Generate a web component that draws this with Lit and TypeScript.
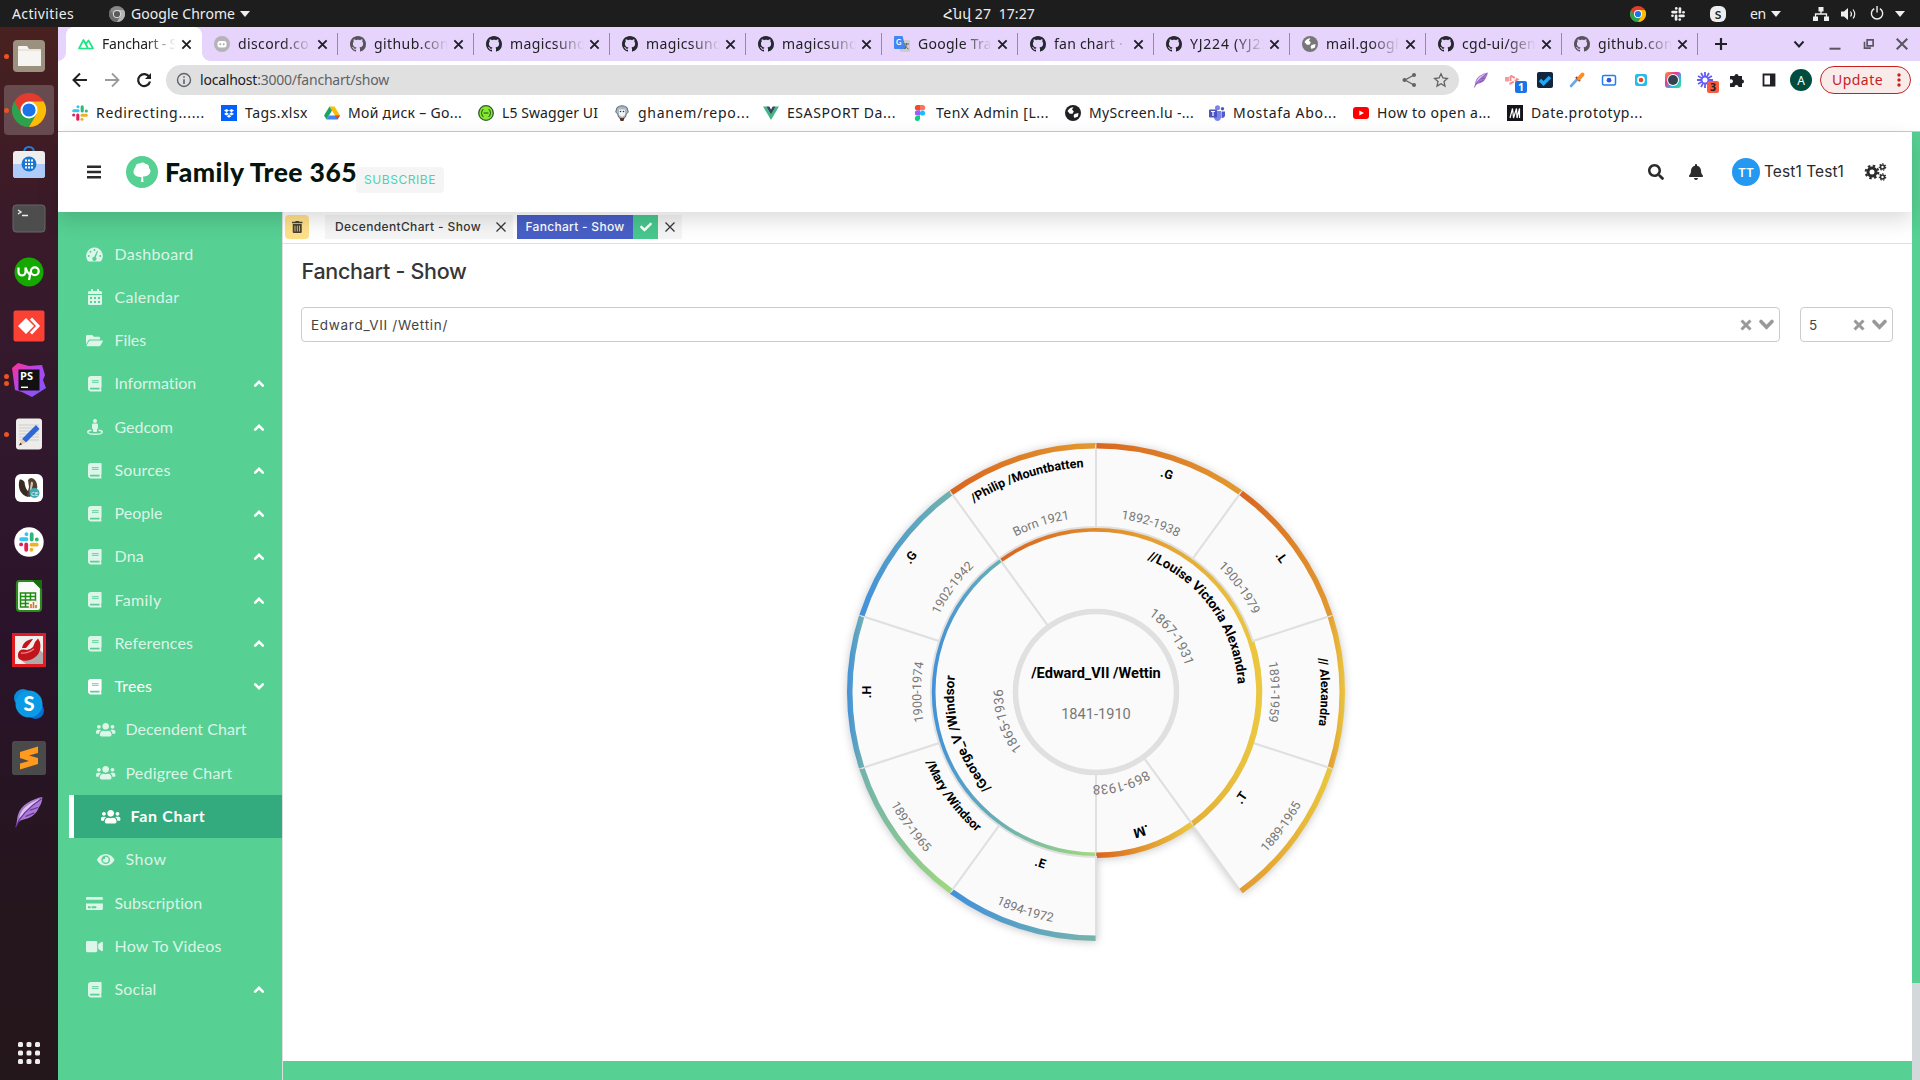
import { LitElement, html, svg, css, TemplateResult } from "lit";
import { customElement } from "lit/decorators.js";
import { styleMap } from "lit/directives/style-map.js";
import { classMap } from "lit/directives/class-map.js";

/* ---------- shared helpers ---------- */

/** Text whose tracking is adjusted so that it fills the given width. */
const fit = (text: string, w: number, cls = "") =>
  html`<span class="fit ${cls}" data-w=${w}>${text}</span>`;

class FitElement extends LitElement {
  updated() {
    this.renderRoot.querySelectorAll<HTMLElement>(".fit").forEach((el) => {
      el.style.letterSpacing = "0px";
      const natural = el.getBoundingClientRect().width;
      const target = Number(el.dataset.w);
      const n = [...(el.textContent ?? "")].length;
      el.style.letterSpacing = `${(target - natural) / n}px`;
    });
  }
}

const slot = (w: number, content: unknown) =>
  html`<span class="slot" style=${styleMap({ width: `${w}px` })}>${content}</span>`;

const icon = (w: number, h: number, vb: string, body: unknown) =>
  html`<svg class="ico" width=${w} height=${h} viewBox=${vb} fill="currentColor">${body}</svg>`;

const fa = (d: string, vw: number, h: number) =>
  icon((h * vw) / 512, h, `0 0 ${vw} 512`, svg`<path d=${d}></path>`);

/* ---------- icon library ---------- */

const P = {
  book: "M448 360V24c0-13.3-10.7-24-24-24H96C43 0 0 43 0 96v320c0 53 43 96 96 96h328c13.3 0 24-10.7 24-24v-16c0-7.500-3.500-14.300-8.900-18.700-4.200-15.400-4.200-59.300 0-74.700 5.400-4.300 8.900-11.100 8.900-18.600zM128 134c0-3.300 2.700-6 6-6h212c3.300 0 6 2.700 6 6v20c0 3.300-2.700 6-6 6H134c-3.300 0-6-2.700-6-6v-20zm0 64c0-3.300 2.700-6 6-6h212c3.300 0 6 2.700 6 6v20c0 3.300-2.700 6-6 6H134c-3.300 0-6-2.700-6-6v-20zm253.400 250H96c-17.700 0-32-14.300-32-32 0-17.600 14.400-32 32-32h285.400c-1.900 17.100-1.900 46.900 0 64z",
  users: "M96 224c35.3 0 64-28.7 64-64s-28.7-64-64-64-64 28.7-64 64 28.7 64 64 64zm448 0c35.3 0 64-28.7 64-64s-28.7-64-64-64-64 28.7-64 64 28.7 64 64 64zm32 32h-64c-17.6 0-33.5 7.1-45.1 18.6 40.3 22.1 68.9 62 75.1 109.4h66c17.7 0 32-14.3 32-32v-32c0-35.3-28.7-64-64-64zm-256 0c61.900 0 112-50.1 112-112S381.900 32 320 32 208 82.1 208 144s50.1 112 112 112zm76.8 32h-8.3c-20.8 10-43.9 16-68.5 16s-47.6-6-68.500-16h-8.300C179.600 288 128 339.600 128 403.200V432c0 26.500 21.500 48 48 48h288c26.500 0 48-21.500 48-48v-28.800c0-63.600-51.600-115.200-115.200-115.200zm-223.700-13.400C161.500 263.100 145.600 256 128 256H64c-35.300 0-64 28.700-64 64v32c0 17.700 14.300 32 32 32h65.900c6.300-47.400 34.900-87.300 75.200-109.400z",
  folder: "M572.694 292.093L500.27 416.248A63.997 63.997 0 0 1 444.989 448H45.025c-18.523 0-30.064-20.093-20.731-36.093l72.424-124.155A64 64 0 0 1 152 256h399.964c18.523 0 30.064 20.093 20.73 36.093zM152 224h328v-48c0-26.51-21.49-48-48-48H272l-64-64H48C21.49 64 0 85.49 0 112v278.046l69.077-118.418C86.214 242.25 117.989 224 152 224z",
  search: "M505 442.7L405.3 343c-4.5-4.5-10.6-7-17-7H372c27.6-35.3 44-79.7 44-128C416 93.1 322.9 0 208 0S0 93.1 0 208s93.1 208 208 208c48.3 0 92.7-16.4 128-44v16.3c0 6.4 2.5 12.5 7 17l99.7 99.7c9.4 9.4 24.6 9.4 33.9 0l28.3-28.3c9.4-9.4 9.4-24.6.1-34zM208 336c-70.7 0-128-57.2-128-128 0-70.7 57.2-128 128-128 70.7 0 128 57.2 128 128 0 70.7-57.2 128-128 128z",
  bell: "M224 512c35.32 0 63.97-28.65 63.97-64H160.03c0 35.35 28.65 64 63.97 64zm215.39-149.71c-19.32-20.76-55.47-51.99-55.47-154.29 0-77.7-54.48-139.9-127.94-155.16V32c0-17.67-14.32-32-31.98-32s-31.98 14.33-31.98 32v20.84C118.56 68.1 64.08 130.3 64.08 208c0 102.3-36.15 133.53-55.47 154.29-6 6.45-8.66 14.16-8.61 21.71.11 16.4 12.98 32 32.1 32h383.8c19.12 0 32-15.6 32.1-32 .05-7.55-2.61-15.27-8.61-21.71z",
  eye: "M572.52 241.4C518.29 135.59 410.93 64 288 64S57.68 135.64 3.48 241.41a32.35 32.35 0 0 0 0 29.19C57.71 376.41 165.07 448 288 448s230.32-71.64 284.52-177.41a32.35 32.35 0 0 0 0-29.19zM288 400a144 144 0 1 1 144-144 143.93 143.93 0 0 1-144 144zm0-240a95.31 95.31 0 0 0-25.31 3.79 47.85 47.85 0 0 1-66.9 66.9A95.78 95.78 0 1 0 288 160z",
  card: "M0 432c0 26.5 21.5 48 48 48h480c26.5 0 48-21.5 48-48V256H0v176zm192-68c0-6.6 5.4-12 12-12h136c6.6 0 12 5.4 12 12v40c0 6.6-5.4 12-12 12H204c-6.6 0-12-5.4-12-12v-40zm-128 0c0-6.6 5.4-12 12-12h72c6.6 0 12 5.4 12 12v40c0 6.6-5.4 12-12 12H76c-6.6 0-12-5.4-12-12v-40zM576 80v48H0V80c0-26.5 21.5-48 48-48h480c26.5 0 48 21.5 48 48z",
  video: "M336.2 64H47.8C21.4 64 0 85.4 0 111.8v288.4C0 426.6 21.4 448 47.8 448h288.4c26.4 0 47.8-21.4 47.8-47.8V111.8c0-26.4-21.4-47.8-47.8-47.8zm189.4 37.7L416 177.3v157.4l109.6 75.5c21.2 14.6 50.4-.3 50.4-25.8V127.5c0-25.4-29.1-40.4-50.4-25.8z",
  check: "M173.898 439.404l-166.4-166.4c-9.997-9.997-9.997-26.206 0-36.204l36.203-36.204c9.997-9.998 26.207-9.998 36.204 0L192 312.69 432.095 72.596c9.997-9.997 26.207-9.997 36.204 0l36.203 36.204c9.997 9.997 9.997 26.206 0 36.204l-294.4 294.401c-9.998 9.997-26.207 9.997-36.204-.001z",
  trash: "M32 464a48 48 0 0 0 48 48h288a48 48 0 0 0 48-48V128H32zm272-256a16 16 0 0 1 32 0v224a16 16 0 0 1-32 0zm-96 0a16 16 0 0 1 32 0v224a16 16 0 0 1-32 0zm-96 0a16 16 0 0 1 32 0v224a16 16 0 0 1-32 0zM432 32H312l-9.4-18.7A24 24 0 0 0 281.1 0H166.8a23.72 23.72 0 0 0-21.4 13.3L136 32H16A16 16 0 0 0 0 48v32a16 16 0 0 0 16 16h416a16 16 0 0 0 16-16V48a16 16 0 0 0-16-16z",
  github: "M8 0C3.58 0 0 3.58 0 8c0 3.54 2.29 6.53 5.47 7.59.4.07.55-.17.55-.38 0-.19-.01-.82-.01-1.49-2.01.37-2.53-.49-2.69-.94-.09-.23-.48-.94-.82-1.13-.28-.15-.68-.52-.01-.53.63-.01 1.08.58 1.23.82.72 1.21 1.87.87 2.33.66.07-.52.28-.87.51-1.07-1.78-.2-3.64-.89-3.64-3.95 0-.87.31-1.59.82-2.15-.08-.2-.36-1.02.08-2.12 0 0 .67-.21 2.2.82.64-.18 1.32-.27 2-.27.68 0 1.36.09 2 .27 1.53-1.04 2.2-.82 2.2-.82.44 1.1.16 1.92.08 2.12.51.56.82 1.27.82 2.15 0 3.07-1.87 3.75-3.65 3.95.29.25.54.73.54 1.48 0 1.07-.01 1.93-.01 2.2 0 .21.15.46.55.38A8.013 8.013 0 0 0 16 8c0-4.42-3.58-8-8-8z",
};

const S = (body: unknown, size = 16, box = 16) => icon(size, size, `0 0 ${box} ${box}`, body);

const cross = (size: number, stroke: number) =>
  S(svg`<path d="M2 2L14 14M14 2L2 14" fill="none" stroke="currentColor" stroke-width=${stroke}></path>`, size);

const chevron = (down = false) =>
  html`<span class=${classMap({ chev: true, down })}>${icon(10, 7, "0 0 10 7",
    svg`<path d="M1.200 5.700L5 1.900 8.800 5.700" fill="none" stroke="currentColor" stroke-width="2.600" stroke-linecap="round"></path>`)}</span>`;

const caret = () => icon(10, 6, "0 0 10 6", svg`<path d="M0 0H10L5 6z"></path>`);

const chrome = (size: number, mono = false) => {
  const c = mono ? ["#888", "#b4b4b4", "#6c6c6c", "#5a5a5a"] : ["#e33b2e", "#fbbc05", "#2ba24c", "#1a73e8"];
  return icon(size, size, "0 0 48 48", svg`
    <circle cx="24" cy="24" r="24" fill=${c[0]}></circle>
    <path d="M3.200 12A24 24 0 0 0 24 48L34.400 30 24 24 13.600 30z" fill=${c[2]}></path>
    <path d="M44.800 12A24 24 0 0 1 24 48L34.400 30 24 12z" fill=${c[1]}></path>
    <circle cx="24" cy="24" r="12" fill=${mono ? "#ddd" : "#fff"}></circle>
    <circle cx="24" cy="24" r="9.300" fill=${c[3]}></circle>`);
};

const slack = (size: number, mono = false) => {
  const c = mono ? ["#eee", "#eee", "#eee", "#eee"] : ["#36c5f0", "#2eb67d", "#ecb22e", "#e01e5a"];
  return icon(size, size, "0 0 24 24", svg`
    <g stroke-width="4.600" stroke-linecap="round" fill="none">
      <path d="M2.600 8.700H9" stroke=${c[0]}></path><path d="M9 2.500V2.600" stroke=${c[0]}></path>
      <path d="M15.300 2.600V9" stroke=${c[1]}></path><path d="M21.500 9H21.400" stroke=${c[1]}></path>
      <path d="M15 15.300H21.400" stroke=${c[2]}></path><path d="M15 21.500V21.400" stroke=${c[2]}></path>
      <path d="M8.700 15V21.400" stroke=${c[3]}></path><path d="M2.500 15H2.600" stroke=${c[3]}></path>
    </g>`);
};

const github = (fill = "#24292f") => S(svg`<path d=${P.github} fill=${fill}></path>`);

const globe = (c: string) => S(svg`<circle cx="8" cy="8" r="8" fill=${c}></circle>
  <path d="M2.500 6Q4.500 2.500 8.500 2.300L7 4.500 8.800 6.500 7.500 8.800H4.800zM9.500 9l4-1-.5 3.500L9.500 13l-1-2z" fill="#fff"></path>`);

const gear = (cx: number, cy: number, r: number, w: number, teeth: number) => {
  const c = (2 * Math.PI * (r + w / 1.3)) / teeth / 2;
  return svg`<circle cx=${cx} cy=${cy} r=${r} fill="none" stroke="currentColor" stroke-width=${w}></circle>
    <circle cx=${cx} cy=${cy} r=${r + w / 1.3} fill="none" stroke="currentColor" stroke-width=${w * 0.7}
      stroke-dasharray="${c} ${c}"></circle>`;
};

const feather = (size: number) => icon(size, size, "0 0 32 36", svg`
  <path d="M31 1C20 3 7 10 4 20 2 26 3 28 1 35 4 29 6 27 12 26 20 24 25 19 27 13 30 9 31 5 31 1z" fill="#a77bd0"></path>
  <path d="M29 3C20 6 10 12 7 19c-1 2-2 4-2 6C12 17 20 10 29 3z" fill="#dcc7ee"></path>
  <path d="M1 35C5 24 15 13 30 3M12 23l10-4M17 16l9-3" stroke="#6d2fa0" stroke-width="1.300" fill="none"></path>`);

const bars = () => S(svg`<path d="M1 1.500h14v2.500H1zM1 6.800h14v2.500H1zM1 12h14v2.500H1z"></path>`);

const gauge = () => icon(17, 15, "0 0 34 30", svg`
  <path fill-rule="evenodd" d="M17 1A17 17 0 0 0 3 27q1 2 3 2H28q2 0 3-2A17 17 0 0 0 17 1zM17 4a2 2 0 1 1 0 4 2 2 0 0 1 0-4zM9 7.500a2 2 0 1 1 0 4 2 2 0 0 1 0-4zM5.500 16a2 2 0 1 1 0 4 2 2 0 0 1 0-4zM28.500 16a2 2 0 1 1 0 4 2 2 0 0 1 0-4zM22 8l2 1-4.500 11.500a4 4 0 1 1-3-1z"></path>`);

const calendar = () => icon(14, 16, "0 0 28 32", svg`
  <path fill-rule="evenodd" d="M0 12H28V29q0 3-3 3H3q-3 0-3-3zM4 16v4h4v-4zM12 16v4h4v-4zM20 16v4h4v-4zM4 24v4h4v-4zM12 24v4h4v-4zM20 24v4h4v-4z"></path>
  <path d="M3 4H6V1q0-1 1-1H9q1 0 1 1V4H18V1q0-1 1-1h2q1 0 1 1V4h3q3 0 3 3v3H0V7q0-3 3-3z"></path>`);

const street = () => icon(16, 16, "0 0 32 32", svg`
  <circle cx="16" cy="4" r="4"></circle>
  <path d="M12 9h8q2 0 2 3v6q0 2-2 2v4q0 2-2 2h-4q-2 0-2-2v-4q-2 0-2-2v-6q0-3 2-3z"></path>
  <path d="M9 22.500C4 23 1.500 24.500 1.500 26c0 3 7 4.500 14.500 4.500S30.500 29 30.500 26c0-1.500-2.500-3-7.500-3.500" fill="none" stroke="currentColor" stroke-width="3"></path>`);

/* ---------- fan chart ---------- */

interface Segment {
  a0: number; a1: number; ring: 2 | 3;
  from: string; to: string;
  name: string; years: string;
  flip?: boolean; yearsAngle?: number;
}

const SEGMENTS: Segment[] = [
  { a0: 72, a1: 108, ring: 3, from: "#e29c32", to: "#e9c53e", name: "// Alexandra", years: "1891-1959" },
  { a0: 108, a1: 144, ring: 3, from: "#e29a32", to: "#e9c83e", name: ".T", years: "1889-1965", flip: true },
  { a0: -36, a1: 144, ring: 2, from: "#d96520", to: "#ebc93f", name: "//Louise Victoria Alexandra", years: "1867-1931" },
  { a0: -180, a1: -36, ring: 2, from: "#4091dc", to: "#a2da7c", name: "/George_V /Windsor", years: "1865-1936" },
  { a0: 144, a1: 180, ring: 2, from: "#d96520", to: "#ebc93f", name: ".M", years: "869-1938", yearsAngle: 164.6 },
  { a0: -180, a1: -144, ring: 3, from: "#4190dc", to: "#76b5a9", name: ".E", years: "1894-1972", flip: true },
  { a0: -144, a1: -108, ring: 3, from: "#72b3ac", to: "#a0d97c", name: "/Mary /Windsor", years: "1897-1965", flip: true },
  { a0: -108, a1: -72, ring: 3, from: "#4190dc", to: "#72b3ac", name: ".H", years: "1900-1974" },
  { a0: -72, a1: -36, ring: 3, from: "#4190dc", to: "#72b3ac", name: ".G", years: "1902-1942" },
  { a0: -36, a1: 0, ring: 3, from: "#d96520", to: "#e29a2f", name: "/Philip /Mountbatten", years: "Born 1921" },
  { a0: 0, a1: 36, ring: 3, from: "#d96520", to: "#e29a2f", name: ".G", years: "1892-1938" },
  { a0: 36, a1: 72, ring: 3, from: "#d96520", to: "#e29a2f", name: ".L", years: "1900-1979" },
];

const UNIT = 83;
const pt = (r: number, deg: number) => {
  const a = (deg * Math.PI) / 180;
  return `${(r * Math.sin(a)).toFixed(2)} ${(-r * Math.cos(a)).toFixed(2)}`;
};
const wedge = (r0: number, r1: number, a0: number, a1: number) => {
  const big = a1 - a0 > 180 ? 1 : 0;
  return `M${pt(r1, a0)}A${r1} ${r1} 0 ${big} 1 ${pt(r1, a1)}L${pt(r0, a1)}A${r0} ${r0} 0 ${big} 0 ${pt(r0, a0)}Z`;
};

@customElement("fan-chart")
export class FanChart extends LitElement {
  static styles = css`
    :host { display: block; }
    svg { display: block; overflow: visible; }
    .fan { filter: drop-shadow(0 1px 4px rgba(0, 0, 0, 0.22)); }
    .wedge { fill: #fafafa; stroke: #e0e0e0; stroke-width: 2; }
    .hub { fill: #fafafa; stroke: #e0e0e0; stroke-width: 5.500px; }
    text { font-family: Roboto, "Liberation Sans", sans-serif; text-anchor: middle; }
    .name { font-weight: 700; fill: #000; }
    .years { fill: #777; }
    .r3 { font-size: 12.500px; }
    .r2 { font-size: 13.400px; }
    .r1 { font-size: 14.600px; }
  `;

  private label(id: string, text: string, mid: number, r: number, flip: boolean, cls: string) {
    const d = flip
      ? `M${pt(r, mid + 75)}A${r} ${r} 0 0 0 ${pt(r, mid - 75)}`
      : `M${pt(r, mid - 75)}A${r} ${r} 0 0 1 ${pt(r, mid + 75)}`;
    return svg`<path id=${id} d=${d} fill="none"></path>
      <text class=${cls}><textPath href="#${id}" startOffset="50%">${text}</textPath></text>`;
  }

  private segment(s: Segment, i: number) {
    const r0 = (s.ring - 1) * UNIT;
    const r1 = s.ring * UNIT;
    return svg`
      <linearGradient id="g${i}"><stop offset="0" stop-color=${s.from}></stop><stop offset="1" stop-color=${s.to}></stop></linearGradient>
      <path class="wedge" d=${wedge(r0 - 1, r1 - 3, s.a0, s.a1)}></path>
      <path d=${wedge(r1 - 5.5, r1, s.a0 + 0.1, s.a1 - 0.1)} fill="url(#g${i})"></path>`;
  }

  private texts(s: Segment, i: number) {
    const mid = (s.a0 + s.a1) / 2;
    const outer = s.ring === 3;
    const rn = outer ? (s.flip ? 184 : 225) : 142;
    const ry = outer ? (s.flip ? 234 : 175) : 93;
    return svg`${this.label(`n${i}`, s.name, mid, rn, !!s.flip, `name r${s.ring}`)}
      ${this.label(`y${i}`, s.years, s.yearsAngle ?? mid, ry, !!s.flip, `years r${s.ring}`)}`;
  }

  render() {
    return html`<svg width="500" height="500" viewBox="-250 -250 500 500">
      <g class="fan">
        ${SEGMENTS.map((s, i) => this.segment(s, i))}
        <circle class="hub" r="80.500"></circle>
      </g>
      ${SEGMENTS.map((s, i) => this.texts(s, i))}
      <text class="name r1" y="-14">/Edward_VII /Wettin</text>
      <text class="years r1" y="27">1841-1910</text>
    </svg>`;
  }
}

/* ---------- desktop top bar ---------- */

const base = css`
  :host { display: block; }
  .slot { display: inline-flex; align-items: center; flex: none; }
  .ico { display: block; flex: none; overflow: visible; }
  .fit { white-space: pre; display: inline-block; flex: none; }
`;

@customElement("desk-bar")
export class DeskBar extends FitElement {
  static styles = [base, css`
    .bar { height: 27px; background: #1d1d1d; color: #eee; display: flex; align-items: center;
      padding: 0 15px 0 12px; font: 14px "Noto Sans", "DejaVu Sans", sans-serif; box-sizing: border-box; }
    .side { display: flex; align-items: center; width: 300px; }
    .side.right { justify-content: flex-end; }
    .clock { flex: 1; padding-left: 631px; }
  `];
  render() {
    return html`<div class="bar">
      <div class="side">
        ${slot(97, fit("Activities", 62))}${slot(22, chrome(16, true))}${slot(109, fit("Google Chrome", 104))}${caret()}
      </div>
      <div class="clock">${fit("Հնվ 27  17:27", 92)}</div>
      <div class="side right">
        ${slot(41, chrome(16))}${slot(39, slack(14, true))}
        ${slot(40, S(svg`<rect x="0" y="0" width="16" height="16" rx="6" fill="#eee"></rect><text x="8" y="12.500" font-size="12" font-weight="700" font-family="Lato" text-anchor="middle" fill="#222">S</text>`))}
        ${slot(21, fit("en", 16))}${slot(42, caret())}
        ${slot(28, S(svg`<path d="M5.500 1h5v4.500h-5zM0 10.500h5V15H0zM11 10.500h5V15h-5z"></path><path d="M8 5V8M2.500 11V8H13.500V11" fill="none" stroke="currentColor" stroke-width="1.300"></path>`))}
        ${slot(29, S(svg`<path d="M0 5.500H3L7 2V14L3 10.500H0z"></path><path d="M9.500 5.500q2 2.500 0 5M12 3.500q3.500 4.500 0 9" fill="none" stroke="currentColor" stroke-width="1.200"></path>`))}
        ${slot(25, S(svg`<path d="M4.500 2.700A6 6 0 1 0 10.500 2.700M7.500 0V7" fill="none" stroke="currentColor" stroke-width="1.500"></path>`, 15))}
        ${caret()}
      </div>
    </div>`;
  }
}

/* ---------- dock ---------- */

interface DockItem { art: TemplateResult; dots?: number; on?: boolean }
const I = (body: unknown, box = 34) => icon(box, box, `0 0 ${box} ${box}`, body);

const DOCK: DockItem[] = [
  { dots: 1, art: I(svg`<rect x="1" y="1" width="32" height="32" rx="4" fill="#9c917f"></rect><path d="M6 8q0-1 1-1h8l2 3h11q1 0 1 1V27H6z" fill="#f7f5f2"></path><path d="M6 11h23" stroke="#ddd6cc"></path>`) },
  { dots: 1, on: true, art: chrome(34) },
  { art: I(svg`<path d="M12 6q0-6 5-6t5 6" fill="none" stroke="#2a7bd0" stroke-width="2"></path><rect x="1" y="4" width="32" height="27" rx="3" fill="#eee"></rect><path d="M1 17H33V28q0 3-3 3H4q-3 0-3-3z" fill="#aecbfa"></path><circle cx="17" cy="17" r="7.500" fill="#1976d2"></circle><path d="M13 13.500h2M16 13.500h2M19 13.500h2M13 17h2M16 17h2M19 17h2M13 20.500h2M16 20.500h2M19 20.500h2" stroke="#fff" stroke-width="2"></path>`) },
  { art: I(svg`<rect x="1" y="4" width="32" height="27" rx="3" fill="#4d4d4d" stroke="#666"></rect><path d="M6 9l3 2-3 2M10 14.500h6" fill="none" stroke="#eee" stroke-width="1.400"></path>`) },
  { art: I(svg`<circle cx="17" cy="17" r="14.500" fill="#14a800"></circle><path d="M6.500 12.500v4.500a3.500 3.500 0 0 0 7 0V12.500q1.500 5 4 7M17 25l1.800-8.500" fill="none" stroke="#fff" stroke-width="2.200"></path><circle cx="22.800" cy="16.300" r="3.900" fill="none" stroke="#fff" stroke-width="2.200"></circle>`) },
  { art: I(svg`<rect x="1.500" y="1.500" width="31" height="31" rx="2" fill="#fb4134"></rect><path d="M6 17l8-8 8 8-8 8z" fill="#fff"></path><path d="M19 9.500l7 7.500-7 7.500" fill="none" stroke="#fff" stroke-width="3"></path>`) },
  { dots: 2, art: I(svg`<defs><linearGradient id="ps" x1="0" y1="0" x2="1" y2="1"><stop offset="0" stop-color="#ff318c"></stop><stop offset=".45" stop-color="#b345f1"></stop><stop offset="1" stop-color="#765af8"></stop></linearGradient></defs><path d="M0 5L6 0l11 3 13-1 3 10-2 5 3 8-14 9-10-5L3 27z" fill="url(#ps)"></path><rect x="6.500" y="6.500" width="21" height="21" fill="#111"></rect><text x="8" y="17" font-size="11" font-weight="700" font-family="Open Sans" fill="#fff">PS</text><path d="M9 24.300h7" stroke="#fff" stroke-width="1.500"></path>`) },
  { dots: 1, art: I(svg`<rect x="4" y="1.500" width="26" height="31" rx="3" fill="#eeecea"></rect><path d="M7 8h20M7 11h20M7 14h20M7 17h20M7 20h20M7 23h20" stroke="#ccc"></path><path d="M10 22L24 8l3.500 4L14 25.500z" fill="#2f66d8"></path><path d="M10 22l4 3.500-7 3z" fill="#f0c9a0"></path><path d="M7 28.500l1.500-3 1.500 2z" fill="#333"></path>`) },
  { art: I(svg`<rect x="3" y="3" width="28" height="28" rx="6" fill="#fff"></rect><path d="M7.500 9C5.500 16 8 24 16 26l3-4C14 20 13 15 12.500 11 11 9 9 8 7.500 9z" fill="#382b24"></path><path d="M16 9q3-4 7 0 3 4 2 9l-3 6-5 2-2-2 2-8z" fill="#55402f"></path><path d="M19 11q2-1 2 2l-1.500 6-2 2z" fill="#d3c6b8"></path><circle cx="22.500" cy="22" r="5" fill="#3fa9b5"></circle><text x="22.500" y="24.500" font-size="6" font-family="Open Sans" text-anchor="middle" fill="#fff">CE</text>`) },
  { art: I(svg`<circle cx="17" cy="17" r="14.700" fill="#fff"></circle><g transform="translate(7 7) scale(.83)"><g stroke-width="4.600" stroke-linecap="round"><path d="M2.600 8.700H9M9 2.500V2.600" stroke="#36c5f0"></path><path d="M15.300 2.600V9M21.500 9H21.400" stroke="#2eb67d"></path><path d="M15 15.300H21.400M15 21.500V21.400" stroke="#ecb22e"></path><path d="M8.700 15V21.400M2.500 15H2.600" stroke="#e01e5a"></path></g></g>`) },
  { art: I(svg`<path d="M7 2H22L29 9V29q0 3-3 3H8q-3 0-3-3V5q0-3 2-3z" fill="#fbfbfb" stroke="#2c8a1c" stroke-width="2.200"></path><path d="M20 1h10v10z" fill="#1c6a10"></path><path d="M8.500 14h15v14h-15zM8.500 17.500h15M8.500 21h15M8.500 24.500h15M13.500 14v14M18.500 14v14" fill="none" stroke="#1f8a10" stroke-width="1.500"></path><rect x="17" y="22" width="8" height="7" fill="#fff" stroke="#ccc" stroke-width=".6"></rect><path d="M19 29v-4M21.500 29v-6M24 29v-3" stroke="#d9782d" stroke-width="1.700"></path>`) },
  { art: I(svg`<rect x="1.500" y="1.500" width="31" height="31" fill="#f1eeee" stroke="#e01b22" stroke-width="3"></rect><path d="M10 28L28 17 31 20V31H14z" fill="#b0abab"></path><path d="M10 15C11 10 15 6.500 21 6L17 11.500 14 15zM6 21Q7 16 12 16.500 17 18 21 14L23 9 26 5.500 28 9Q30 18 24 23.500 17 29 10 27.500 5 26 6 21z" fill="#c2141a"></path><path d="M9 20q6 1 13-4" stroke="#f08080" stroke-width="1.300" fill="none"></path>`) },
  { art: I(svg`<circle cx="11" cy="11" r="9" fill="#0b8bd8"></circle><circle cx="23.500" cy="23.500" r="8.500" fill="#0a6fd0"></circle><circle cx="17" cy="17" r="13.500" fill="#0a9ae6"></circle><text x="17" y="24" font-size="20" font-weight="900" font-family="Lato" text-anchor="middle" fill="#fff">S</text>`) },
  { art: I(svg`<rect width="34" height="34" rx="2.500" fill="#4a4a4a"></rect><path d="M8 11L26 5.500V12L17 14.500 26 17V23L8 28.500V22.500L17 20 8 17z" fill="#ff9a1f"></path>`) },
  { art: feather(32) },
];

@customElement("side-dock")
export class SideDock extends LitElement {
  static styles = [base, css`
    .dock { width: 58px; height: 1053px; box-sizing: border-box; display: flex; flex-direction: column; align-items: center;
      padding: 2px 0 0; background: linear-gradient(#48211f, #3a1a29 18%, #31182d 38%, #2a132a 58%, #25161d 85%, #24171b); }
    .cell { width: 58px; height: 54px; display: grid; grid-template-columns: 12px 34px 12px; align-items: center; position: relative; z-index: 0; }
    .cell.on::before { content: ""; position: absolute; left: 4px; top: 2px; width: 50px; height: 50px; border-radius: 4px; background: rgba(255,255,255,.2); z-index: -1; }
    .dots { display: flex; flex-direction: column; gap: 2px; padding-left: 4px; }
    .dot { width: 5px; height: 5px; border-radius: 50%; background: #e95420; }
    .art { display: flex; justify-content: center; }
    .grid { margin-top: auto; padding-bottom: 15px; color: #eee; }
  `];
  render() {
    return html`<div class="dock">
      ${DOCK.map((d) => html`<div class=${classMap({ cell: true, on: !!d.on })}>
        <div class="dots">${Array.from({ length: d.dots ?? 0 }, () => html`<i class="dot"></i>`)}</div>
        <div class="art">${d.art}</div></div>`)}
      <div class="grid">${icon(24, 24, "0 0 24 24", [1, 9.5, 18].map((y) => [1, 9.5, 18].map((x) =>
        svg`<rect x=${x} y=${y} width="5" height="5" rx="1.500"></rect>`)))}</div>
    </div>`;
  }
}

/* ---------- browser chrome ---------- */

const TABS: [TemplateResult, string, number][] = [
  [S(svg`<path d="M1 12.500L5.500 4l4.500 8.500zM8 7.500L10.500 4.500 15 12.500H10" fill="none" stroke="#1de682" stroke-width="1.700" stroke-linejoin="round"></path>`), "Fanchart - S", 75],
  [S(svg`<circle cx="8" cy="8" r="8" fill="#b5b2b8"></circle><rect x="3.500" y="5" width="9" height="6.500" rx="2.500" fill="#fff"></rect><circle cx="6.300" cy="8.300" r="1" fill="#aaa"></circle><circle cx="9.700" cy="8.300" r="1" fill="#aaa"></circle>`), "discord.co", 71],
  [github("#57535c"), "github.con", 75],
  [github(), "magicsund", 76],
  [github(), "magicsund", 76],
  [github(), "magicsund", 76],
  [S(svg`<rect x="6" y="4" width="10" height="12" rx="1" fill="#ccc"></rect><path d="M0 1q0-1 1-1H8.500L12 13H1q-1 0-1-1z" fill="#4285f4"></path><text x="4.800" y="9" font-size="7.500" font-weight="700" font-family="Lato" text-anchor="middle" fill="#fff">G</text><path d="M10 8h5M12.500 7v1q0 3-2.500 5M11 9.500q1 2.500 3.500 3.500" stroke="#666" fill="none"></path>`), "Google Tra", 74],
  [github(), "fan chart ·", 69],
  [github(), "YJ224 (YJ22", 80],
  [globe("#777"), "mail.googl", 73],
  [github(), "cgd-ui/gen", 74],
  [github("#57535c"), "github.con", 75],
];

const BOOKMARKS: [TemplateResult, string, number, number][] = [
  [slack(16), "Redirecting......", 109, 149],
  [S(svg`<rect width="16" height="16" fill="#0061ff"></rect><path d="M5.500 4L8 5.600 5.500 7.200 3 5.600zM10.500 4L13 5.600 10.500 7.200 8 5.600zM5.500 7.300L8 8.900 5.500 10.500 3 8.900zM10.500 7.300L13 8.900 10.500 10.500 8 8.900zM8 9.800l2.300 1.400L8 12.700 5.700 11.200z" fill="#fff"></path>`), "Tags.xlsx", 63, 103],
  [S(svg`<path d="M5.500 1.500h5L16 10.500h-5z" fill="#fbbc04"></path><path d="M5.500 1.500L0 10.500l2.500 4L8 5.500z" fill="#1ea362"></path><path d="M5 10.500H16L13.500 14.500H2.500z" fill="#4285f4"></path><path d="M11 10.500h5l-2.500 4z" fill="#ea4335"></path>`), "Мой диск – Go...", 114, 154],
  [S(svg`<circle cx="8" cy="8" r="7.300" fill="#85ea2d" stroke="#2f5a2c" stroke-width="1.300"></circle><path d="M5.500 4.500q-1.500 0-1.500 1.500t-1 2q1 .5 1 2t1.500 1.500M10.500 4.500q1.500 0 1.500 1.500t1 2q-1 .5-1 2t-1.500 1.500M5.500 8h5" stroke="#24422a" fill="none"></path>`), "L5 Swagger UI", 96, 136],
  [S(svg`<path d="M3 2.500q5-3.500 10 0l1.300 4.500-2 2-.8 3-3.500 2-3.500-2-.8-3-2-2z" fill="#a9b8c6" stroke="#555e68" stroke-width=".9"></path><path d="M5 4.500h6v5.500l-3 2-3-2z" fill="#f2f2f2"></path><circle cx="6.500" cy="6.500" r=".8" fill="#333"></circle><circle cx="9.500" cy="6.500" r=".8" fill="#333"></circle><path d="M5.500 13h5l-1 3h-3z" fill="#5a3327"></path>`), "ghanem/repo...", 112, 149],
  [S(svg`<path d="M0 1.500h3.300L8 9.800l4.700-8.300H16L8 15z" fill="#41b883"></path><path d="M3.300 1.500H6.300L8 4.500 9.700 1.500h3L8 9.800z" fill="#35495e"></path>`), "ESASPORT Da...", 109, 149],
  [S(svg`<path d="M5.500 0H8v5.300H5.500a2.600 2.600 0 0 1 0-5.300z" fill="#f24e1e"></path><path d="M8 0h2.500a2.600 2.600 0 0 1 0 5.300H8z" fill="#ff7262"></path><path d="M5.500 5.300H8v5.300H5.500a2.600 2.600 0 0 1 0-5.300z" fill="#a259ff"></path><circle cx="10.500" cy="8" r="2.600" fill="#1abcfe"></circle><path d="M5.500 10.700H8v2.700a2.600 2.600 0 1 1-2.500-2.700z" fill="#0acf83"></path>`), "TenX Admin [L...", 113, 153],
  [globe("#202124"), "MyScreen.lu -...", 105, 144],
  [S(svg`<circle cx="8.500" cy="2.800" r="2.500" fill="#7b83eb"></circle><circle cx="13.500" cy="3.800" r="1.700" fill="#5059c9"></circle><path d="M5 6h7v7q-1 3-3.500 3T5 13z" fill="#7b83eb"></path><path d="M12.500 6.500H16V11q-1 2.500-3.500 2z" fill="#5059c9"></path><rect x="0" y="4.500" width="8" height="8" rx="1" fill="#4b53bc"></rect><path d="M2 6.500h4M4 6.500v4.500" stroke="#fff" stroke-width="1.200"></path>`), "Mostafa Abo...", 104, 144],
  [S(svg`<rect y="2" width="16" height="12" rx="3" fill="#f00"></rect><path d="M6.300 5.500L11 8 6.300 10.500z" fill="#fff"></path>`), "How to open a...", 114, 154],
  [S(svg`<rect width="16" height="16" fill="#15141a"></rect><path d="M3 13L5.500 3.500 6.500 13 9.500 3.500 10 13 12.500 3.500V13" stroke="#fff" fill="none" stroke-width="1.200"></path>`), "Date.prototyp...", 112, 152],
];

const badge = (x: number, fill: string, ink: string, t: string) => svg`
  <rect x=${x} y="9" width="12" height="12" rx="2" fill=${fill}></rect>
  <text x=${x + 6} y="19" font-size="10.500" font-weight="700" font-family="Open Sans" text-anchor="middle" fill=${ink}>${t}</text>`;

const EXT: TemplateResult[] = [
  feather(16),
  S(svg`<path d="M0 5h4v4.500H0z" fill="#f79a9a"></path><path d="M5.500 3.500L12.500 7.500 5.500 11.500z" fill="none" stroke="#f48b8b" stroke-width="2" stroke-dasharray="5 1.200"></path>${badge(10, "#1a73e8", "#fff", "1")}`),
  S(svg`<rect width="16" height="16" rx="2" fill="#11263f"></rect><path d="M3 8l3.500 3.500L13 5" stroke="#22a7f2" stroke-width="3.400" fill="none"></path>`),
  S(svg`<path d="M2 14l6.500-7" stroke="#6aa9e8" stroke-width="2.600" stroke-linecap="round"></path><path d="M7 5l4 4" stroke="#8a3d2c" stroke-width="2.200"></path><path d="M10 6.500L13.500 2.500" stroke="#fb8c2a" stroke-width="4" stroke-linecap="round"></path>`),
  S(svg`<rect x="1.500" y="3.500" width="13" height="9.500" rx="1.500" fill="#fff" stroke="#1f7ff0" stroke-width="1.500"></rect><circle cx="8" cy="8.200" r="2.400" fill="#3857d6"></circle>`),
  S(svg`<rect x="2" y="2" width="12" height="12" rx="2" fill="#25bdea"></rect><circle cx="8" cy="8" r="3.900" fill="#fff"></circle><circle cx="8" cy="8" r="2.300" fill="#f0452a"></circle>`),
  S(svg`<defs><linearGradient id="cam" x1="0" y1="0" x2="1" y2="1"><stop offset="0" stop-color="#ff9d2e"></stop><stop offset=".35" stop-color="#f0309a"></stop><stop offset=".7" stop-color="#20c4e8"></stop><stop offset="1" stop-color="#53d769"></stop></linearGradient></defs><rect width="16" height="16" rx="3" fill="url(#cam)"></rect><circle cx="8" cy="8" r="6" fill="#fff"></circle><circle cx="8" cy="8" r="5" fill="#33424d"></circle>`),
  S(svg`<g stroke="#625df5" stroke-width="1.800">${[0, 30, 60, 90, 120, 150].map((a) => svg`<path d="M8 0V5M8 11V16" transform="rotate(${a} 8 8)"></path>`)}</g><circle cx="8" cy="8" r="3.300" fill="none" stroke="#625df5" stroke-width="1.500"></circle>${badge(10, "#fb5a3c", "#222", "3")}`),
  S(svg`<path d="M1 4h4.500a2 2 0 1 1 4 0H13V7.500a2 2 0 1 1 0 4V15H9.500a2 2 0 1 0-4 0H1V11a2 2 0 1 0 0-3.500z" fill="#202124"></path>`),
  S(svg`<path d="M2.500 2.500h11v11h-11z" fill="none" stroke="#202124" stroke-width="1.800"></path><path d="M9 2h5v12H9z" fill="#202124"></path>`),
];

@customElement("browser-chrome")
export class BrowserChrome extends FitElement {
  static styles = [base, css`
    :host { font: 14px "Noto Sans", "Open Sans", sans-serif; color: #202124; }
    .strip { height: 34px; background: #e7d4fc; display: flex; padding-left: 8px; }
    .tab { width: 136px; height: 34px; box-sizing: border-box; padding-left: 12px; display: flex; align-items: center; gap: 8px; position: relative; }
    .tab .name { width: 74px; overflow: hidden; flex: none; margin-right: -3px; padding-bottom: 1px;
      -webkit-mask-image: linear-gradient(90deg, #000 60%, transparent 100%); mask-image: linear-gradient(90deg, #000 60%, transparent 100%); }
    .tab.on { background: #fff; border-radius: 8px 8px 0 0; }
    .tab.on::before, .tab.on::after { content: ""; position: absolute; bottom: 0; width: 8px; height: 8px; }
    .tab.on::before { left: -8px; background: radial-gradient(circle at 0 0, transparent 7.500px, #fff 8px); }
    .tab.on::after { right: -8px; background: radial-gradient(circle at 100% 0, transparent 7.500px, #fff 8px); }
    .tab.sep { border-right: 1px solid transparent; border-image: linear-gradient(transparent 20%, #948a9e 20%, #948a9e 80%, transparent 80%) 1; }
    .win { display: flex; align-items: center; justify-content: space-between; flex: 1; padding: 0 11px 0 15px; }
    .win .right { display: flex; gap: 20px; color: #5a5560; align-items: center; }
    .bar { height: 38px; background: #fff; display: flex; align-items: center; padding: 0 9px 0 14px; }
    .nav { display: flex; width: 94px; gap: 16px; }
    .dim { color: #9b9b9b; }
    .omni { width: 1293px; height: 30px; border-radius: 15px; background: #e0e0e0; box-sizing: border-box; padding: 0 10px 0 10px; display: flex; align-items: center; color: #5f6368; flex: none; }
    .omni b { font-weight: 400; color: #202124; }
    .url { margin-left: 8px; flex: 1; padding-bottom: 2px; }
    .omni .acts { display: flex; gap: 16px; }
    .exts { display: flex; gap: 16px; padding-left: 14px; }
    .me { width: 22px; height: 22px; border-radius: 50%; background: #004d40; color: #fff; font-size: 12px; display: grid; place-items: center; margin-left: 13px; }
    .update { width: 91px; height: 28px; box-sizing: border-box; border: 1px solid #c5221f; border-radius: 14px; background: #faebeb; color: #c5221f; margin-left: 8px; display: flex; align-items: center; justify-content: space-between; padding: 0 6px 0 11px; }
    .update .fit { padding-bottom: 2px; }
    .marks { height: 33px; box-sizing: border-box; border-bottom: 1px solid #c9c9c9; background: #fff; display: flex; align-items: center; padding: 0 0 5px 14px; }
    .mark { display: flex; gap: 8px; align-items: center; }
  `];
  render() {
    return html`
      <div class="strip">
        ${TABS.map(([ic, t, w], i) => html`<div class=${classMap({ tab: true, on: i === 0, sep: i > 0 })}>
          ${ic}<span class="name">${fit(t, w)}</span>${cross(11, 2.8)}</div>`)}
        <div class="win">
          ${S(svg`<path d="M8 2V14M2 8H14" stroke="#202124" stroke-width="2.200"></path>`)}
          <div class="right">
            ${S(svg`<path d="M3.500 5.500L8 10.500 12.500 5.500" stroke="#202124" stroke-width="1.900" fill="none"></path>`)}
            ${S(svg`<path d="M2.500 12.700h11" stroke="currentColor" stroke-width="2"></path>`)}
            ${S(svg`<path d="M5.500 2.500h8v8h-8z M2 5v8.500H10.500" stroke="currentColor" stroke-width="2.200" fill="none"></path>`, 12)}
            ${cross(14, 2.4)}
          </div>
        </div>
      </div>
      <div class="bar">
        <div class="nav">
          ${S(svg`<path d="M15 8H2M8 1.500L1.500 8 8 14.500" stroke="currentColor" stroke-width="2" fill="none"></path>`)}
          <span class="dim">${S(svg`<path d="M1 8H14M8 1.500L14.500 8 8 14.500" stroke="currentColor" stroke-width="1.800" fill="none"></path>`)}</span>
          ${S(svg`<path d="M13.300 5A6 6 0 1 0 14 9.500" stroke="currentColor" stroke-width="2.200" fill="none"></path><path d="M15 1V7H9z"></path>`)}
        </div>
        <div class="omni">
          ${S(svg`<circle cx="8" cy="8" r="6.500" fill="none" stroke="currentColor" stroke-width="1.400"></circle><path d="M7.200 7.200h1.600V12H7.200zM7.200 4.200h1.600v1.600H7.200z"></path>`)}
          <span class="url"><span class="fit" data-w="189"><b>localhost</b>:3000/fanchart/show</span></span>
          <span class="acts">
            ${S(svg`<path d="M13 3L4 8l9 5" fill="none" stroke="currentColor" stroke-width="1.300"></path><circle cx="13" cy="3" r="2"></circle><circle cx="3.500" cy="8" r="2"></circle><circle cx="13" cy="13" r="2"></circle>`)}
            ${S(svg`<path d="M8 1.800l1.900 4.200 4.500.5-3.400 3.100 1 4.500L8 11.800l-4 2.300 1-4.500L1.600 6.500 6.100 6z" fill="none" stroke="currentColor" stroke-width="1.300"></path>`)}
          </span>
        </div>
        <div class="exts">${EXT}</div>
        <span class="me">A</span>
        <div class="update">${fit("Update", 51)}${icon(10, 14, "0 0 10 14", svg`<circle cx="5" cy="2" r="1.700"></circle><circle cx="5" cy="7" r="1.700"></circle><circle cx="5" cy="12" r="1.700"></circle>`)}</div>
      </div>
      <div class="marks">
        ${BOOKMARKS.map(([ic, t, w, pitch]) => slot(pitch, html`<span class="mark">${ic}${fit(t, w)}</span>`))}
      </div>`;
  }
}

/* ---------- sidebar menu ---------- */

interface Item { t: string; w: number; ic: TemplateResult; kind?: "sub" | "active"; chev?: "up" | "down"; lit?: boolean }
const book = () => fa(P.book, 448, 15.5);
const users = () => fa(P.users, 640, 15.5);
const MENU: Item[] = [
  { t: "Dashboard", w: 79, ic: gauge() },
  { t: "Calendar", w: 65, ic: calendar() },
  { t: "Files", w: 31.5, ic: fa(P.folder, 576, 15) },
  { t: "Information", w: 82, ic: book(), chev: "up" },
  { t: "Gedcom", w: 58.5, ic: street(), chev: "up" },
  { t: "Sources", w: 56, ic: book(), chev: "up" },
  { t: "People", w: 48, ic: book(), chev: "up" },
  { t: "Dna", w: 29.5, ic: book(), chev: "up" },
  { t: "Family", w: 47, ic: book(), chev: "up" },
  { t: "References", w: 78.5, ic: book(), chev: "up" },
  { t: "Trees", w: 37.5, ic: book(), chev: "down", lit: true },
  { t: "Decendent Chart", w: 121, ic: users(), kind: "sub" },
  { t: "Pedigree Chart", w: 107, ic: users(), kind: "sub" },
  { t: "Fan Chart", w: 75, ic: users(), kind: "active" },
  { t: "Show", w: 41, ic: fa(P.eye, 576, 15.5), kind: "sub" },
  { t: "Subscription", w: 88, ic: fa(P.card, 576, 15) },
  { t: "How To Videos", w: 107, ic: fa(P.video, 576, 15) },
  { t: "Social", w: 42, ic: book(), chev: "up" },
];

@customElement("side-menu")
export class SideMenu extends FitElement {
  static styles = [base, css`
    .menu { width: 224px; height: 868px; box-sizing: border-box; padding-top: 20.400px; background: #56d093; font: 16px Lato, "Open Sans", sans-serif; color: rgba(255,255,255,.8); }
    .row { height: 43.270px; display: flex; align-items: center; padding: 0 15px 0 26px; box-sizing: border-box; }
    .row .fit { padding-bottom: 2px; margin-left: -0.500px; }
    .pic { width: 21px; display: flex; justify-content: center; margin-right: 10px; }
    .row.sub { padding-left: 37px; }
    .row.active { margin-left: 11px; border-left: 5px solid #fff; padding-left: 26px; background: #34ab7e; color: #fff; font-weight: 700; }
    .row.lit { color: #fff; }
    .chev { margin-left: auto; display: block; color: #fff; width: 16px; }
    .chev .ico { margin: auto; }
    .down { transform: rotate(180deg); }
  `];
  render() {
    return html`<div class="menu">${MENU.map((m) => html`
      <div class=${classMap({ row: true, sub: m.kind === "sub", active: m.kind === "active", lit: !!m.lit })}>
        <span class="pic">${m.ic}</span>${fit(m.t, m.w)}${m.chev ? chevron(m.chev === "down") : ""}
      </div>`)}</div>`;
  }
}

/* ---------- application ---------- */

@customElement("app-root")
export class AppRoot extends FitElement {
  static styles = [base, css`
    :host { width: 1920px; height: 1080px; overflow: hidden; background: #fff; }
    .desk { display: flex; }
    .window { width: 1862px; height: 1053px; }
    .page { display: flex; height: 948px; }
    .site { width: 1854px; font-family: Inter, "Liberation Sans", sans-serif; color: #363636; }
    .scroll { width: 8px; background: #d3d8db; }
    .thumb { height: 851px; background: #56d093; }
    .head { height: 80px; background: #fff; display: flex; align-items: center; box-shadow: 0 8px 20px rgba(10,10,10,.14); position: relative; padding: 0 25px 0 28px; box-sizing: border-box; color: #2b2b2b; }
    .logo { display: flex; align-items: center; gap: 7px; margin-left: 24px; }
    .brand { font: 900 26.500px Lato, sans-serif; color: #04150d; }
    .tag { width: 88px; height: 26px; margin: 15px 0 0 -1px; border-radius: 4px; background: #f5f5f5; color: #4bd2b4; font-size: 12px; display: grid; place-items: center; }
    .tools { margin-left: auto; display: flex; align-items: center; }
    .who { width: 28px; height: 28px; border-radius: 50%; background: #2599f2; color: #fff; font-size: 12px; font-weight: 600; display: grid; place-items: center; margin-right: 4px; }
    .user { font-size: 15.500px; font-weight: 400; padding-bottom: 1px; }
    .body { display: flex; height: 868px; }
    .main { flex: 1; border-left: 1px solid #dcdfdd; }
    .content { height: 849px; background: #fff; display: flex; flex-direction: column; }
    .foot { height: 19px; background: #56d093; }
    .tabs { height: 32px; border-bottom: 1px solid #dfdfdf; display: flex; align-items: center; padding: 0 0 2px 2px; font-size: 12px; font-weight: 500; box-sizing: border-box; }
    .bin { width: 24px; height: 24px; border-radius: 4px; background: #ffe08a; color: #4a4331; display: grid; place-items: center; margin-right: 16px; }
    .pill { height: 24px; display: flex; align-items: center; background: #f5f5f5; }
    .pill.old { width: 188px; margin-right: 4px; box-sizing: border-box; padding: 0 6px 0 10px; justify-content: space-between; }
    .pill.now { width: 116px; background: #485fc7; color: #fff; justify-content: center; }
    .pill.ok { width: 25px; background: #48c78e; color: #fff; justify-content: center; }
    .pill.shut { width: 24px; justify-content: center; }
    h1 { margin: 14px 0 0 18.500px; font-size: 21.500px; line-height: 26px; font-weight: 500; }
    .picks { display: flex; gap: 20px; padding: 23px 18px 0 18px; }
    .pick { height: 35px; border: 1px solid #ccc; border-radius: 4px; box-sizing: border-box; display: flex; align-items: center; padding: 0 5px 0 9px; font-size: 13.500px; color: #444; }
    .pick.person { width: 1479px; }
    .pick.depth { width: 93px; padding-left: 8px; }
    .ctl { margin-left: auto; display: flex; align-items: center; gap: 7px; color: #999; }
    .chart { padding: 100px 0 0 563px; }
  `];

  private pick(cls: string, text: TemplateResult) {
    return html`<div class="pick ${cls}">${text}<span class="ctl">
      ${cross(12, 4)}${icon(15, 11, "0 0 15 11", svg`<path d="M2 2.500L7.500 8.200 13 2.500" fill="none" stroke="currentColor" stroke-width="3.600" stroke-linecap="round"></path>`)}</span></div>`;
  }

  render() {
    return html`
      <desk-bar></desk-bar>
      <div class="desk">
        <side-dock></side-dock>
        <div class="window">
          <browser-chrome></browser-chrome>
          <div class="page">
            <div class="site">
              <div class="head">
                ${bars()}
                <div class="logo">
                  ${icon(32, 32, "0 0 32 32", svg`<circle cx="16" cy="16" r="16" fill="#56d093"></circle>
                    <path d="M15 26L15.500 21C12 21 7.500 20 7.500 15.500 7.500 13 9 12 9.500 11 9.500 8 12 7 14 7.500 15.500 6 18.500 6.500 19.500 8 22 8 23.500 10 23 12 25 13.500 25 17 23 18.500 21.500 20 19 20.500 17 20.500L17.500 26z" fill="#fff"></path>`)}
                  ${fit("Family Tree 365", 192, "brand")}
                </div>
                <span class="tag">${fit("SUBSCRIBE", 72)}</span>
                <div class="tools">
                  ${slot(41, fa(P.search, 512, 16))}${slot(43, fa(P.bell, 448, 16))}
                  <span class="who">TT</span>${slot(101, fit("Test1 Test1", 80, "user"))}
                  ${icon(22, 18, "0 0 22 18", svg`${gear(7, 9, 4, 3, 8)}${gear(17.5, 4, 2, 1.6, 7)}${gear(17.5, 14, 2, 1.6, 7)}`)}
                </div>
              </div>
              <div class="body">
                <side-menu></side-menu>
                <div class="main">
                  <div class="content">
                    <div class="tabs">
                      <span class="bin">${fa(P.trash, 448, 12)}</span>
                      <span class="pill old">${fit("DecendentChart - Show", 146)}${cross(12, 1.7)}</span>
                      <span class="pill now">${fit("Fanchart - Show", 99)}</span>
                      <span class="pill ok">${fa(P.check, 512, 12)}</span>
                      <span class="pill shut">${cross(12, 1.7)}</span>
                    </div>
                    <h1>${fit("Fanchart - Show", 165)}</h1>
                    <div class="picks">
                      ${this.pick("person", fit("Edward_VII /Wettin/", 137))}
                      ${this.pick("depth", html`<span>5</span>`)}
                    </div>
                    <div class="chart"><fan-chart></fan-chart></div>
                  </div>
                  <div class="foot"></div>
                </div>
              </div>
            </div>
            <div class="scroll"><div class="thumb"></div></div>
          </div>
        </div>
      </div>`;
  }
}
